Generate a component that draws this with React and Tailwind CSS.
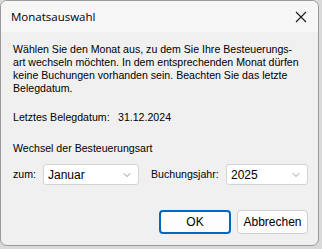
import { ChevronDown } from "lucide-react";

function Select({ value, width }) {
  return (
    <div
      className={`${width} h-[21px] bg-white border border-[#d4d4d4] rounded-[3px] flex items-center justify-between pl-[4px] pr-[5px]`}
    >
      <span className="text-[12px] text-black leading-none">{value}</span>
      <ChevronDown className="w-[12px] h-[12px] text-[#5a5a5a]" strokeWidth={1.3} />
    </div>
  );
}

export default function App() {
  return (
    <div className="w-[322px] h-[249px] bg-[#d9d9d9] overflow-hidden" style={{ fontFamily: '"Liberation Sans", Arial, sans-serif' }}>
      <div className="w-[319px] h-[246px] rounded-[7px] border border-[#9a9a9a] bg-[#f0f0f0] flex flex-col overflow-hidden">
        {/* Title bar */}
        <div className="h-[31px] bg-[#f7f7f7] flex items-center justify-between pl-[10px] pr-[8px] shrink-0">
          <span className="text-[11.5px] text-black" style={{ fontFamily: '"Open Sans", "Noto Sans", sans-serif' }}>
            Monatsauswahl
          </span>
          <svg width="12" height="12" viewBox="0 0 12 12" className="mr-[3px]">
            <path d="M1 1 L11 11 M11 1 L1 11" stroke="#1a1a1a" strokeWidth="1.1" fill="none" />
          </svg>
        </div>

        {/* Body */}
        <div className="flex-1 flex flex-col pl-[12px] pr-[10px] pt-[11px] text-[10.6px] leading-[13px] text-black whitespace-nowrap">
          <p>
            Wählen Sie den Monat aus, zu dem Sie Ihre Besteuerungs-
            <br />
            art wechseln möchten. In dem entsprechenden Monat dürfen
            <br />
            keine Buchungen vorhanden sein. Beachten Sie das letzte
            <br />
            Belegdatum.
          </p>

          <div className="flex mt-[16px]">
            <span className="w-[105px]">Letztes Belegdatum:</span>
            <span>31.12.2024</span>
          </div>

          <div className="mt-[18px]">Wechsel der Besteuerungsart</div>

          <div className="flex items-center mt-[9px]">
            <span className="w-[30px]">zum:</span>
            <Select value="Januar" width="w-[96px]" />
            <span className="ml-[12px] w-[75px]">Buchungsjahr:</span>
            <Select value="2025" width="w-[82px]" />
          </div>

          <div className="flex justify-end gap-[6px] mt-[25px]">
            <button className="w-[72px] h-[24px] bg-[#fdfdfd] border-2 border-[#0067c0] rounded-[4px] text-[12px] text-black">
              OK
            </button>
            <button className="w-[71px] h-[24px] bg-[#fdfdfd] border border-[#d0d0d0] rounded-[4px] text-[12px] text-black">
              Abbrechen
            </button>
          </div>
        </div>
      </div>
    </div>
  );
}
